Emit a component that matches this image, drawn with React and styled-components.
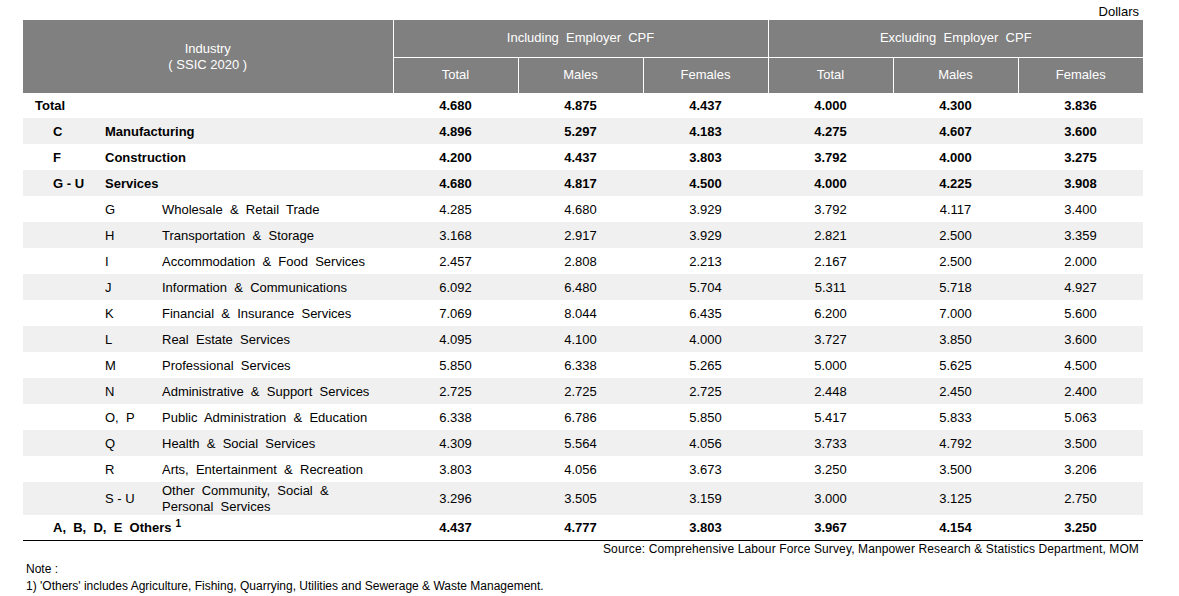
import React from "react";
import styled, { createGlobalStyle } from "styled-components";

const GlobalStyle = createGlobalStyle`
  body {
    margin: 0;
    background: #fff;
    font-family: "Liberation Sans", Arial, sans-serif;
    color: #000;
  }
`;

const rows = [
  { kind: "total", label: "Total", h: 25, v: ["4.680", "4.875", "4.437", "4.000", "4.300", "3.836"] },
  { kind: "main", code: "C", label: "Manufacturing", v: ["4.896", "5.297", "4.183", "4.275", "4.607", "3.600"] },
  { kind: "main", code: "F", label: "Construction", v: ["4.200", "4.437", "3.803", "3.792", "4.000", "3.275"] },
  { kind: "main", code: "G - U", label: "Services", v: ["4.680", "4.817", "4.500", "4.000", "4.225", "3.908"] },
  { kind: "sub", code: "G", label: "Wholesale  &  Retail  Trade", v: ["4.285", "4.680", "3.929", "3.792", "4.117", "3.400"] },
  { kind: "sub", code: "H", label: "Transportation  &  Storage", v: ["3.168", "2.917", "3.929", "2.821", "2.500", "3.359"] },
  { kind: "sub", code: "I", label: "Accommodation  &  Food  Services", v: ["2.457", "2.808", "2.213", "2.167", "2.500", "2.000"] },
  { kind: "sub", code: "J", label: "Information  &  Communications", v: ["6.092", "6.480", "5.704", "5.311", "5.718", "4.927"] },
  { kind: "sub", code: "K", label: "Financial  &  Insurance  Services", v: ["7.069", "8.044", "6.435", "6.200", "7.000", "5.600"] },
  { kind: "sub", code: "L", label: "Real  Estate  Services", v: ["4.095", "4.100", "4.000", "3.727", "3.850", "3.600"] },
  { kind: "sub", code: "M", label: "Professional  Services", v: ["5.850", "6.338", "5.265", "5.000", "5.625", "4.500"] },
  { kind: "sub", code: "N", label: "Administrative  &  Support  Services", v: ["2.725", "2.725", "2.725", "2.448", "2.450", "2.400"] },
  { kind: "sub", code: "O,  P", label: "Public  Administration  &  Education", v: ["6.338", "6.786", "5.850", "5.417", "5.833", "5.063"] },
  { kind: "sub", code: "Q", label: "Health  &  Social  Services", v: ["4.309", "5.564", "4.056", "3.733", "4.792", "3.500"] },
  { kind: "sub", code: "R", label: "Arts,  Entertainment  &  Recreation", v: ["3.803", "4.056", "3.673", "3.250", "3.500", "3.206"] },
  { kind: "sub", code: "S - U", label: "Other  Community,  Social  &\nPersonal  Services", h: 33, v: ["3.296", "3.505", "3.159", "3.000", "3.125", "2.750"] },
  { kind: "others", label: "A,  B,  D,  E  Others", h: 25, v: ["4.437", "4.777", "3.803", "3.967", "4.154", "3.250"] },
];

const Page = styled.div`
  width: 1120px;
  padding: 4px 0 0 23px;
  font-size: 13px;
`;

const Unit = styled.div`
  text-align: right;
  padding-right: 4px;
  line-height: 16px;
  height: 16px;
`;

const Table = styled.table`
  width: 1120px;
  border-collapse: collapse;
  table-layout: fixed;
  border-bottom: 1px solid #000;
`;

const HeadRow = styled.tr`
  height: ${({ $h }) => $h}px;
`;

const HeadCell = styled.th`
  background: #808080;
  color: #fff;
  font-weight: normal;
  font-size: 13px;
  text-align: center;
  vertical-align: middle;
  line-height: 16px;
  padding: 0;
  border: 0;
  border-left: ${({ $first }) => ($first ? "0" : "1px solid #fff")};
  border-bottom: ${({ $sep }) => ($sep ? "1px solid #fff" : "0")};
  white-space: pre;
`;

const BodyRow = styled.tr`
  height: ${({ $h }) => $h}px;
  line-height: 16px;
  background: ${({ $striped }) => ($striped ? "#f0f0f0" : "#fff")};
  font-weight: ${({ $bold }) => ($bold ? "bold" : "normal")};
`;

const NumCell = styled.td`
  text-align: center;
  padding: 1px 0 0;
  vertical-align: middle;
`;

const LabelCell = styled.td`
  padding: 1px 0 0;
  vertical-align: middle;
`;

const Label = styled.div`
  display: flex;
  align-items: center;
  padding-left: ${({ $indent }) => $indent}px;
  white-space: pre;
`;

const Code = styled.span`
  width: ${({ $w }) => $w}px;
  flex: none;
`;

const Name = styled.span`
  white-space: pre;
`;

const Sup = styled.sup`
  font-size: 10px;
  font-weight: bold;
  line-height: 0;
  vertical-align: 5px;
  margin-left: 4px;
`;

const Source = styled.div`
  width: 1120px;
  text-align: right;
  padding-right: 4px;
  box-sizing: border-box;
  line-height: 16px;
  font-size: 12px;
  letter-spacing: 0.12px;
`;

const Notes = styled.div`
  padding: 4px 0 0 3px;
  font-size: 12px;
  line-height: 17px;
`;

function IndustryLabel({ row }) {
  if (row.kind === "total") {
    return <Label $indent={12}>{row.label}</Label>;
  }
  if (row.kind === "others") {
    return (
      <Label $indent={30}>
        <Name>
          {row.label}
          <Sup>1</Sup>
        </Name>
      </Label>
    );
  }
  if (row.kind === "main") {
    return (
      <Label $indent={30}>
        <Code $w={52}>{row.code}</Code>
        <Name>{row.label}</Name>
      </Label>
    );
  }
  return (
    <Label $indent={82}>
      <Code $w={57}>{row.code}</Code>
      <Name>{row.label}</Name>
    </Label>
  );
}

export default function App() {
  return (
    <>
      <GlobalStyle />
      <Page>
        <Unit>Dollars</Unit>
        <Table>
          <colgroup>
            <col style={{ width: 370 }} />
            {[0, 1, 2, 3, 4, 5].map((i) => (
              <col key={i} style={{ width: 125 }} />
            ))}
          </colgroup>
          <thead>
            <HeadRow $h={37}>
              <HeadCell rowSpan={2} $first>
                {"Industry\n( SSIC 2020 )"}
              </HeadCell>
              <HeadCell colSpan={3} $sep>Including  Employer  CPF</HeadCell>
              <HeadCell colSpan={3} $sep>Excluding  Employer  CPF</HeadCell>
            </HeadRow>
            <HeadRow $h={36}>
              {["Total", "Males", "Females", "Total", "Males", "Females"].map((h, i) => (
                <HeadCell key={i}>{h}</HeadCell>
              ))}
            </HeadRow>
          </thead>
          <tbody>
            {rows.map((row, i) => (
              <BodyRow
                key={i}
                $striped={i % 2 === 1}
                $h={row.h || 26}
                $bold={row.kind !== "sub"}
              >
                <LabelCell>
                  <IndustryLabel row={row} />
                </LabelCell>
                {row.v.map((v, j) => (
                  <NumCell key={j}>{v}</NumCell>
                ))}
              </BodyRow>
            ))}
          </tbody>
        </Table>
        <Source>
          Source:  Comprehensive Labour Force Survey, Manpower Research &amp; Statistics Department, MOM
        </Source>
        <Notes>
          <div>Note :</div>
          <div>1) 'Others' includes Agriculture, Fishing, Quarrying, Utilities and Sewerage &amp; Waste Management.</div>
        </Notes>
      </Page>
    </>
  );
}
